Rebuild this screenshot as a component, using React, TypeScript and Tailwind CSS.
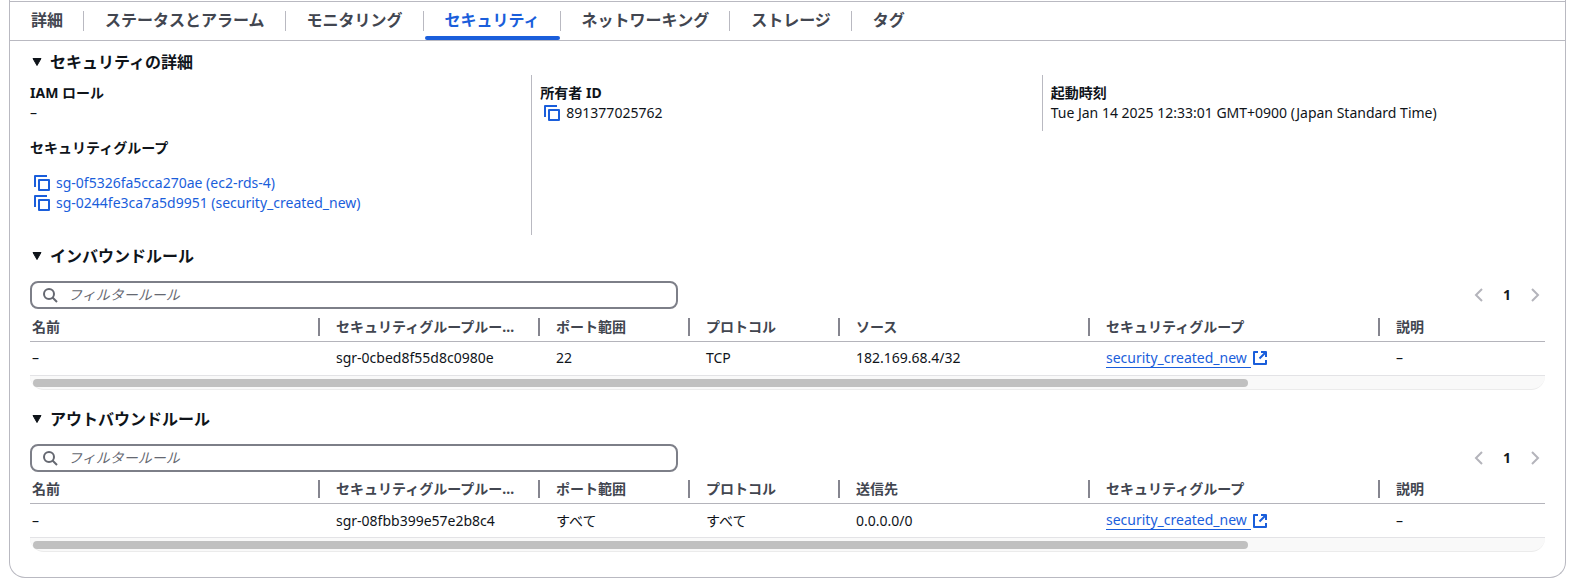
import type { ReactNode } from "react";

type Rule = { id: string; port: string; protocol: string; peer: string };

const TABS = [
  "詳細",
  "ステータスとアラーム",
  "モニタリング",
  "セキュリティ",
  "ネットワーキング",
  "ストレージ",
  "タグ",
];
const ACTIVE_TAB = "セキュリティ";

function CopyIcon() {
  return (
    <svg className="size-4 shrink-0" viewBox="0 0 16 16" fill="none" stroke="currentColor" strokeWidth="2" strokeLinejoin="round" aria-hidden="true">
      <path d="M1 12V1h12" />
      <path d="M5 5h10v10H5z" />
    </svg>
  );
}

function ExternalIcon() {
  return (
    <svg className="size-[14px] shrink-0" viewBox="0 0 14 14" fill="none" stroke="currentColor" strokeWidth="2" strokeLinejoin="round" aria-hidden="true">
      <path d="M5 1H1v12h12V9" />
      <path d="M8 1h5v5M13 1L6.500 7.500" />
    </svg>
  );
}

function SearchIcon() {
  return (
    <svg className="size-4 shrink-0 text-[#656871]" viewBox="0 0 16 16" fill="none" stroke="currentColor" strokeWidth="2" aria-hidden="true">
      <circle cx="7" cy="7" r="5" />
      <path d="M15 15l-4.500-4.500" />
    </svg>
  );
}

function Chevron({ d }: { d: string }) {
  return (
    <svg className="size-4" viewBox="0 0 16 16" fill="none" stroke="currentColor" strokeWidth="2" aria-hidden="true">
      <path d={d} />
    </svg>
  );
}

function SectionTitle({ children }: { children: ReactNode }) {
  return (
    <h2>
      <button type="button" aria-expanded="true" className="flex h-5 items-center gap-2 pl-0.5 text-base font-bold leading-5">
        <svg className="h-2 w-[10px]" viewBox="0 0 10 8" aria-hidden="true">
          <path d="M1 .5h8L5 7.500z" fill="currentColor" stroke="currentColor" strokeLinejoin="round" />
        </svg>
        {children}
      </button>
    </h2>
  );
}

function Field({ label, children }: { label: string; children: ReactNode }) {
  return (
    <div>
      <dt className="font-bold">{label}</dt>
      <dd>{children}</dd>
    </div>
  );
}

function GroupLink({ name }: { name: string }) {
  return (
    <li className="flex items-center gap-1.5 pl-1 text-[#1a5edb]">
      <button type="button" aria-label="コピー">
        <CopyIcon />
      </button>
      <a href="#">{name}</a>
    </li>
  );
}

function HeadCell({ children, last }: { children: ReactNode; last?: boolean }) {
  return (
    <th scope="col" className="h-7 p-0 text-left font-bold text-[#424650]">
      <div className="flex items-center">
        <span className="min-w-0 flex-1 truncate px-4">{children}</span>
        {!last && <span className="h-[18px] w-0.5 shrink-0 bg-[#85858f]" />}
      </div>
    </th>
  );
}

function RuleSection({ title, peerLabel, rule, inputId }: { title: string; peerLabel: string; rule: Rule; inputId: string }) {
  return (
    <section className="pb-[19px]">
      <SectionTitle>{title}</SectionTitle>
      <div className="mt-[15px] flex items-center justify-between">
        <label htmlFor={inputId} className="flex h-7 w-[648px] items-center gap-2.5 rounded-lg border-2 border-[#7d7f88] px-[10px]">
          <SearchIcon />
          <input id={inputId} type="text" aria-label={title} placeholder="フィルタールール" className="h-6 flex-1 bg-transparent leading-6 outline-none placeholder:italic placeholder:text-[#656871]" />
        </label>
        <nav className="flex items-center gap-4 pr-0.5 text-[#b4b4bb]">
          <button type="button" disabled aria-label="前のページ"><Chevron d="M11 2L5 8l6 6" /></button>
          <button type="button" className="font-bold text-[#16191f]">1</button>
          <button type="button" disabled aria-label="次のページ"><Chevron d="M5 2l6 6-6 6" /></button>
        </nav>
      </div>
      <table className="mt-1 w-full table-fixed border-collapse">
        <colgroup>
          <col className="w-[290px]" />
          <col className="w-[220px]" />
          <col className="w-[150px]" />
          <col className="w-[150px]" />
          <col className="w-[250px]" />
          <col className="w-[290px]" />
          <col />
        </colgroup>
        <thead>
          <tr className="border-b border-[#b4b4bb]">
            <th scope="col" className="h-7 p-0 text-left font-bold text-[#424650]">
              <div className="flex items-center justify-between">
                <span className="pl-0.5">名前</span>
                <span className="h-[18px] w-0.5 bg-[#85858f]" />
              </div>
            </th>
            <HeadCell>セキュリティグループルール ID</HeadCell>
            <HeadCell>ポート範囲</HeadCell>
            <HeadCell>プロトコル</HeadCell>
            <HeadCell>{peerLabel}</HeadCell>
            <HeadCell>セキュリティグループ</HeadCell>
            <HeadCell last>説明</HeadCell>
          </tr>
        </thead>
        <tbody>
          <tr className="h-[34px] border-b border-[#e3e3e6]">
            <td className="pl-0.5">–</td>
            <td className="pl-4">{rule.id}</td>
            <td className="pl-4">{rule.port}</td>
            <td className="pl-4">{rule.protocol}</td>
            <td className="pl-4">{rule.peer}</td>
            <td className="pl-4">
              <a href="#" className="flex items-center gap-0.5 text-[#1a5edb]">
                <span className="border-b border-[#1a5edb] pr-1 leading-[18px]">security_created_new</span>
                <ExternalIcon />
              </a>
            </td>
            <td className="pl-4">–</td>
          </tr>
        </tbody>
      </table>
      <div className="h-[14px] rounded-b-2xl border-b border-[#ebebeb] bg-[#f9f9f9] px-[3px] pt-[3px]">
        <div className="h-2 w-[80.500%] rounded-full bg-[#c0c0c0]" />
      </div>
    </section>
  );
}

export default function App() {
  return (
    <main
      lang="ja"
      className="ml-[9px] mr-[15px] rounded-b-2xl border-x border-b border-[#b9b9c1] bg-white pt-px font-['Noto_Sans','Noto_Sans_CJK_JP',sans-serif] text-sm leading-5 text-[#0f141a]"
    >
      <div role="tablist" className="flex h-10 border-y border-[#b9b9c1]">
        {TABS.map((tab, i) => (
          <div key={tab} className="relative flex items-start pt-2">
            <button
              type="button"
              role="tab"
              aria-selected={tab === ACTIVE_TAB}
              className={
                tab === ACTIVE_TAB
                  ? "h-5 pl-[21px] pr-5 text-base font-bold leading-5 text-[#1a5edb]"
                  : "h-5 pl-[21px] pr-5 text-base font-bold leading-5 text-[#424650]"
              }
            >
              {tab}
            </button>
            {i < TABS.length - 1 && <span className="mt-px h-5 w-px bg-[#b9b9c1]" />}
            {tab === ACTIVE_TAB && <span className="absolute inset-x-px bottom-0 h-1 rounded-sm bg-[#1a5edb]" />}
          </div>
        ))}
      </div>

      <div className="px-5 pb-1.5 pt-[11px]">
        <SectionTitle>セキュリティの詳細</SectionTitle>
        <dl className="-ml-[9px] -mr-[7px] mt-[3px] grid grid-cols-3 items-start">
          <div className="space-y-[15px] border-l border-transparent pl-2 pt-2">
            <Field label="IAM ロール">–</Field>
            <Field label="セキュリティグループ">
              <ul className="pt-[15px]">
                <GroupLink name="sg-0f5326fa5cca270ae (ec2-rds-4)" />
                <GroupLink name="sg-0244fe3ca7a5d9951 (security_created_new)" />
              </ul>
            </Field>
          </div>
          <div className="h-40 border-l border-[#b9b9c1] pl-2 pt-2">
            <Field label="所有者 ID">
              <span className="flex items-center gap-1.5 pl-1">
                <button type="button" aria-label="コピー" className="text-[#1a5edb]">
                  <CopyIcon />
                </button>
                891377025762
              </span>
            </Field>
          </div>
          <div className="h-14 border-l border-[#b9b9c1] pl-2 pt-2">
            <Field label="起動時刻">Tue Jan 14 2025 12:33:01 GMT+0900 (Japan Standard Time)</Field>
          </div>
        </dl>
        <div className="mt-[11px]">
          <RuleSection
            title="インバウンドルール"
            peerLabel="ソース"
            inputId="inbound-filter"
            rule={{ id: "sgr-0cbed8f55d8c0980e", port: "22", protocol: "TCP", peer: "182.169.68.4/32" }}
          />
          <RuleSection
            title="アウトバウンドルール"
            peerLabel="送信先"
            inputId="outbound-filter"
            rule={{ id: "sgr-08fbb399e57e2b8c4", port: "すべて", protocol: "すべて", peer: "0.0.0.0/0" }}
          />
        </div>
      </div>
    </main>
  );
}
